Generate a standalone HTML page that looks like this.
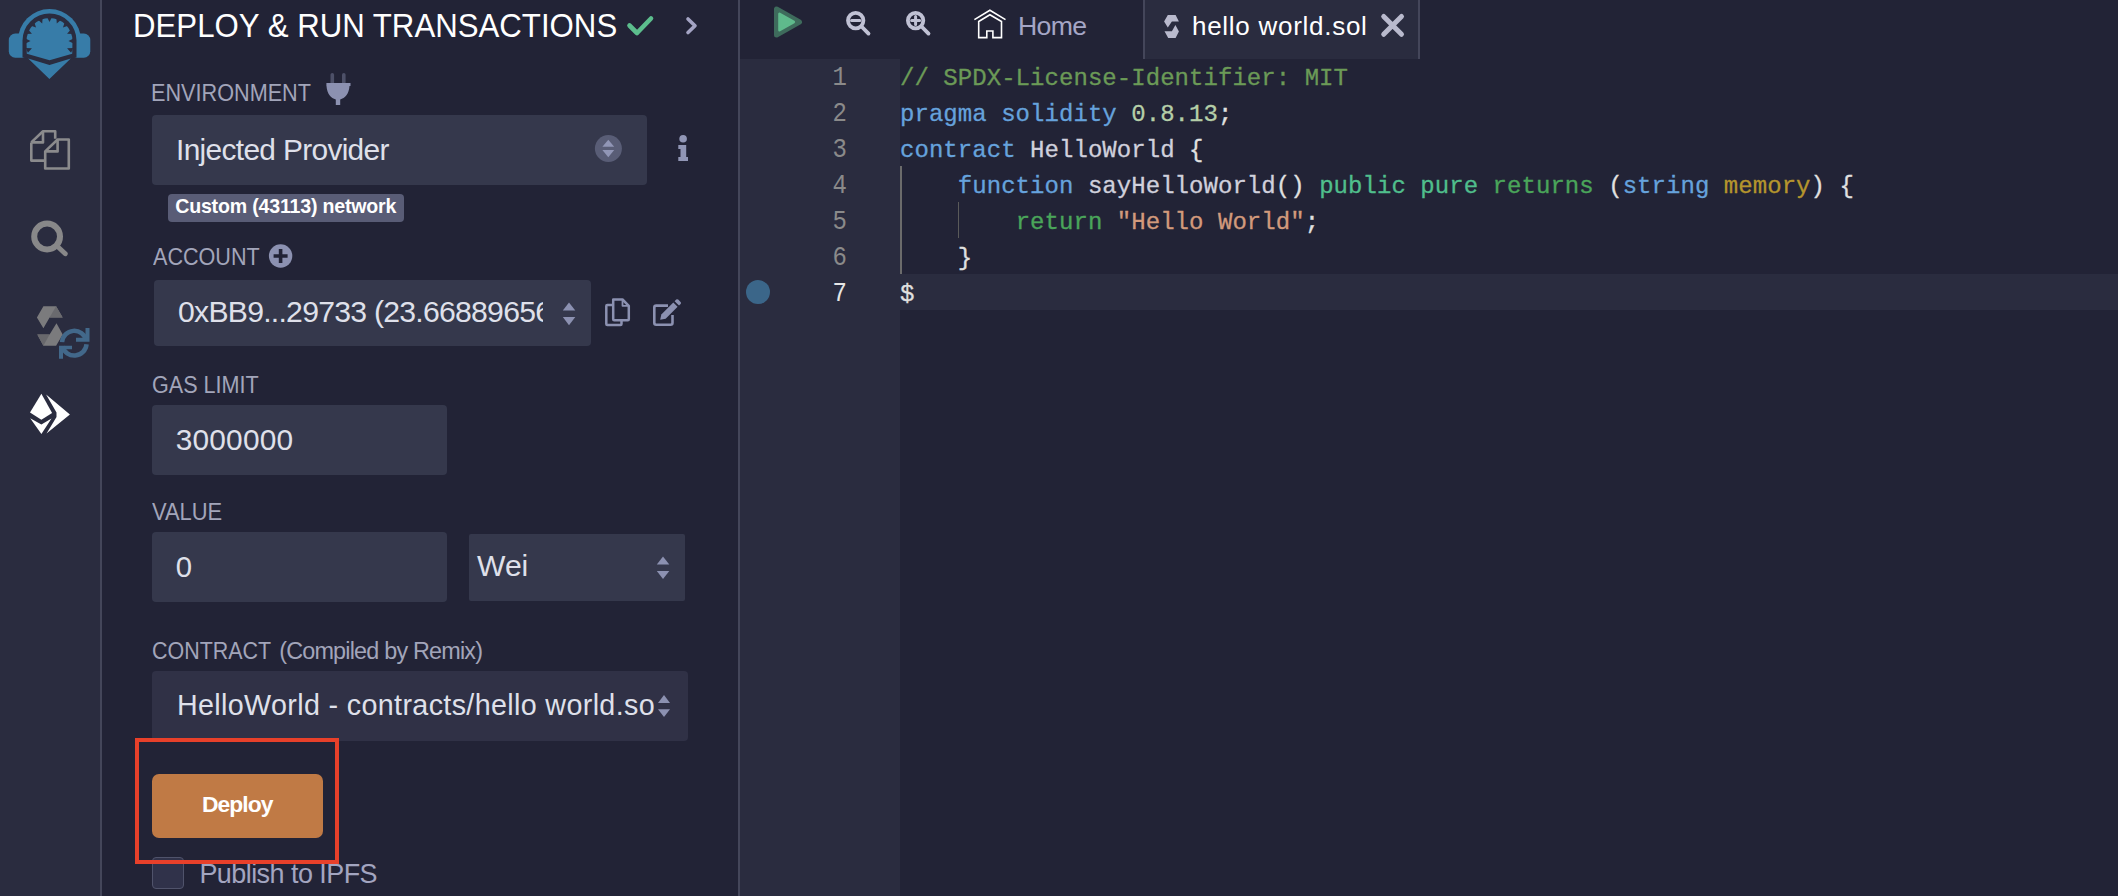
<!DOCTYPE html>
<html><head><meta charset="utf-8">
<style>
*{margin:0;padding:0;box-sizing:border-box}
html,body{width:2118px;height:896px;overflow:hidden;background:#222336;font-family:"Liberation Sans",sans-serif}
.abs{position:absolute}
.t{position:absolute;white-space:nowrap;font-family:"Liberation Sans",sans-serif}
svg{position:absolute;z-index:2}
#iconpanel{left:0;top:0;width:100px;height:896px;background:#2a2c3f}
#b1{left:100px;top:0;width:2px;height:896px;background:#44465a}
#side{left:102px;top:0;width:636px;height:896px;background:#222336}
#b2{left:738px;top:0;width:2px;height:896px;background:#44465a}
.lbl{color:#a2a3bd;font-size:23px;white-space:nowrap}
.sel{background:#35384c;border-radius:4px}
.val{color:#e0e1ea;font-size:28px;white-space:nowrap}
.code{font-family:"Liberation Mono",monospace;font-size:24px;white-space:pre;line-height:36px;-webkit-text-stroke:0.3px;letter-spacing:0.05px}
.ln{position:absolute;left:740px;width:107px;text-align:right;font-family:"Liberation Mono",monospace;font-size:24px;line-height:36px;color:#8a8a8a;transform:scaleY(1.15);transform-origin:0 24px}
.cm{color:#6b9a57}.kw{color:#66a2dc}.nu{color:#b5cea8}.id{color:#d0d0dc}.vis{color:#50be8c}.ret{color:#4aa55a}.mem{color:#b5952d}.str{color:#d29a7c}
</style></head><body>
<div id="iconpanel" class="abs"></div>
<div id="b1" class="abs"></div>
<div id="side" class="abs"></div>
<div id="b2" class="abs"></div>

<!-- side panel content -->
<div id="title" class="t" style="left:132.6px;top:-8.0px;font-size:33.91px;line-height:67.83px;letter-spacing:0px;color:#ffffff;font-weight:normal;transform:scaleX(0.92);transform-origin:0 0;">DEPLOY &amp; RUN TRANSACTIONS</div>

<div id="envlbl" class="t" style="left:151.2px;top:70.0px;font-size:23.33px;line-height:46.67px;letter-spacing:0px;color:#a2a5ba;font-weight:normal;transform:scaleX(0.928);transform-origin:0 0;">ENVIRONMENT</div>
<div id="envsel" class="abs sel" style="left:152px;top:115px;width:495px;height:70px"></div>
<div id="envtxt" class="t" style="left:176.0px;top:119.6px;font-size:29.86px;line-height:59.71px;letter-spacing:-0.663px;color:#dfe0ea;font-weight:normal;">Injected Provider</div>

<div id="badge" class="abs" style="left:168px;top:194px;width:236px;height:28px;background:#595c76;border-radius:4px"></div>
<div id="badgetxt" class="t" style="left:175.2px;top:187.4px;font-size:19.58px;line-height:39.15px;letter-spacing:-0.19px;color:#ffffff;font-weight:bold;">Custom (43113) network</div>

<div id="acclbl" class="t" style="left:152.5px;top:233.2px;font-size:23.91px;line-height:47.83px;letter-spacing:0px;color:#a2a5ba;font-weight:normal;transform:scaleX(0.903);transform-origin:0 0;">ACCOUNT</div>
<div id="accsel" class="abs sel" style="left:154px;top:280px;width:437px;height:66px"></div>
<div class="abs" style="left:154px;top:280px;width:389px;height:66px;overflow:hidden"><div id="acctxt" class="t" style="left:24px;top:1.1px;font-size:30.2px;line-height:61.45px;letter-spacing:-0.75px;color:#dfe0ea">0xBB9...29733 (23.66889656</div></div>

<div id="gaslbl" class="t" style="left:151.8px;top:360.5px;font-size:24.06px;line-height:48.12px;letter-spacing:0px;color:#a2a5ba;font-weight:normal;transform:scaleX(0.897);transform-origin:0 0;">GAS LIMIT</div>
<div id="gassel" class="abs sel" style="left:152px;top:405px;width:295px;height:70px"></div>
<div id="gastxt" class="t" style="left:175.7px;top:410.4px;font-size:29.86px;line-height:59.72px;letter-spacing:0.2px;color:#dfe0ea;font-weight:normal;">3000000</div>

<div id="vallbl" class="t" style="left:152.0px;top:487.5px;font-size:24.2px;line-height:48.41px;letter-spacing:0px;color:#a2a5ba;font-weight:normal;transform:scaleX(0.906);transform-origin:0 0;">VALUE</div>
<div id="valsel" class="abs sel" style="left:152px;top:532px;width:295px;height:70px"></div>
<div id="valtxt" class="t" style="left:175.7px;top:538.3px;font-size:29.3px;line-height:58.59px;letter-spacing:0.0px;color:#dfe0ea;font-weight:normal;">0</div>
<div id="weisel" class="abs sel" style="left:469px;top:534px;width:216px;height:67px;border-radius:2px"></div>
<div id="weitxt" class="t" style="left:477.1px;top:536.4px;font-size:30.14px;line-height:60.29px;letter-spacing:-0.1px;color:#dfe0ea;font-weight:normal;">Wei</div>

<div id="conlbl" class="t" style="left:151.7px;top:626.6px;font-size:24.06px;line-height:48.12px;letter-spacing:0px;color:#a2a5ba;font-weight:normal;transform:scaleX(0.892);transform-origin:0 0;">CONTRACT</div><div id="conlbl2" class="t" style="left:279.2px;top:627.6px;font-size:23.38px;line-height:46.76px;letter-spacing:-0.8px;color:#a2a5ba;font-weight:normal;">(Compiled by Remix)</div>
<div id="consel" class="abs sel" style="left:152px;top:671px;width:536px;height:70px;background:#303146"></div>
<div class="abs" style="left:152px;top:671px;width:503.7px;height:70px;overflow:hidden"><div id="contxt" class="t" style="left:25px;top:6px;font-size:28.7px;line-height:57.39px;letter-spacing:0.35px;color:#dfe0ea">HelloWorld - contracts/hello world.sol</div></div>

<div id="deploy" class="abs" style="left:152px;top:774px;width:171px;height:64px;background:#c07a45;border-radius:7px"></div>
<div id="deploytxt" class="t" style="left:202.0px;top:781.9px;font-size:22.9px;line-height:45.8px;letter-spacing:-0.96px;color:#ffffff;font-weight:bold;">Deploy</div>

<div id="chk" class="abs" style="left:152px;top:857px;width:32px;height:32px;background:#30324a;border:1.5px solid #50536b;border-radius:4px"></div>
<div id="ipfs" class="t" style="left:199.4px;top:848.0px;font-size:26.96px;line-height:53.91px;letter-spacing:-0.543px;color:#a3a5c0;font-weight:normal;">Publish to IPFS</div>
<div id="redbox" class="abs"  style="left:135px;top:738px;width:204px;height:126px;border:4px solid #e8402a;z-index:3"></div>


<div id="tab" class="abs" style="left:1143px;top:0;width:277px;height:59px;background:#2a2c3f;border-left:2px solid #44465a;border-right:2px solid #44465a"></div>
<!-- icon panel icons -->
<svg class="abs" style="left:0;top:0" width="100" height="90" viewBox="0 0 100 90">
  <defs><clipPath id="topc"><rect x="0" y="0" width="100" height="45"/></clipPath></defs>
  <circle cx="49.5" cy="40.5" r="31.5" fill="#377ca8" clip-path="url(#topc)"/>
  <rect x="8.8" y="33.5" width="20" height="24.2" rx="6.5" fill="#377ca8"/>
  <rect x="70.5" y="33.5" width="19.8" height="24.2" rx="6.5" fill="#377ca8"/>
  <path d="M22.5 40.5 A27 27 0 0 1 76.5 40.5 L76.5 57.2 L49.5 65 L22.5 57.2 Z" fill="#2a2c3f"/>
  <polygon points="28.2,58.5 49.5,65 70.8,58.5 49.4,79.1" fill="#377ca8"/>
  <path d="M26.5 41 A23 23 0 0 1 72.5 41 L72.2 53.7 L49.6 60.2 L26.8 53.7 Z" fill="#377ca8"/>
  <g fill="#2a2c3f"><polygon points="25.83,47.88 27.90,52.87 31.95,48.27"/><polygon points="25.00,38.30 25.00,43.70 30.50,41.00"/><polygon points="27.90,29.13 25.83,34.12 31.95,33.73"/><polygon points="34.09,21.77 30.27,25.59 36.06,27.56"/><polygon points="42.62,17.33 37.63,19.40 42.23,23.45"/><polygon points="52.20,16.50 46.80,16.50 49.50,22.00"/><polygon points="61.37,19.40 56.38,17.33 56.77,23.45"/><polygon points="68.73,25.59 64.91,21.77 62.94,27.56"/><polygon points="73.17,34.12 71.10,29.13 67.05,33.73"/><polygon points="74.00,43.70 74.00,38.30 68.50,41.00"/><polygon points="71.10,52.87 73.17,47.88 67.05,48.27"/></g>
</svg>
<svg class="abs" style="left:28px;top:128px" width="44" height="44" viewBox="0 0 44 44" fill="none" stroke="#8b8b8d" stroke-width="2.6" stroke-linejoin="round">
  <path d="M3.3 14.4 L15 3.3 L27.2 3.3 L27.2 10.8"/>
  <path d="M3.3 14.4 L3.3 32.6 L17.2 32.6"/>
  <path d="M3.3 14.4 L15 14.4 L15 3.3"/>
  <path d="M17.2 23.4 L29.6 11.5 L40.8 11.5 L40.8 40.5 L17.2 40.5 Z"/>
  <path d="M17.2 23.4 L29.6 23.4 L29.6 11.5"/>
</svg>
<svg class="abs" style="left:28px;top:218px" width="44" height="44" viewBox="0 0 44 44" fill="none" stroke="#888889" stroke-linecap="round">
  <circle cx="19.1" cy="18.5" r="12.9" stroke-width="6"/>
  <path d="M28.5 27.5 L37.3 35.8" stroke-width="4.8"/>
</svg>
<svg class="abs" style="left:30px;top:300px" width="65" height="65" viewBox="0 0 65 65">
  <polygon points="13.4,6.2 26.1,6.2 32.7,17.4 19.6,17.4 13.4,28.3 6.9,17.4" fill="#7b7b7d"/>
  <polygon points="26.1,6.2 32.7,17.4 19.6,17.4" fill="#6a6a6e"/>
  <polygon points="7.3,34.5 19.6,34.5 26.5,23.2 32.7,34.5 26.1,45.7 13.4,45.7" fill="#7b7b7d"/>
  <polygon points="7.3,34.5 19.6,34.5 13.4,45.7" fill="#68686c"/>
  <g fill="none" stroke="#42688a" stroke-width="4.5">
    <path d="M32.05 42.1 A12.3 12.3 0 0 1 56.2 40"/>
    <path d="M56.55 44.3 A12.3 12.3 0 0 1 32.4 46.4"/>
  </g>
  <polygon points="55.5,28 59.5,28 59.5,41.7 46,41.7 46,37.7 55.5,37.7" fill="#42688a"/>
  <polygon points="29,45.7 42,45.7 42,49.3 33,49.3 33,58.8 29,58.8" fill="#42688a"/>
</svg>
<svg class="abs" style="left:20px;top:385px" width="60" height="60" viewBox="0 0 60 60" fill="#ffffff">
  <polygon points="21.4,8.7 10,27.5 21.4,34.8 32.1,28.1"/>
  <polygon points="10.2,33.2 21.4,39.5 31.5,33.5 21.4,48.9"/>
  <polygon points="26.1,9.4 49.9,29.5 26.5,48.6 36.5,32.1 36.5,27.5"/>
</svg>

<!-- side panel icons -->
<svg class="abs" style="left:620px;top:10px" width="40" height="32" viewBox="0 0 40 32" fill="none" stroke="#5cbd8d" stroke-width="4.6" stroke-linecap="round" stroke-linejoin="round">
  <path d="M9.5 15.5 L17 23 L31 8.5"/>
</svg>
<svg class="abs" style="left:680px;top:12px" width="24" height="28" viewBox="0 0 24 28" fill="none" stroke="#a4a4c4" stroke-width="3.6" stroke-linecap="round" stroke-linejoin="round">
  <path d="M8 7 L15 13.8 L8 20.5"/>
</svg>
<svg class="abs" style="left:320px;top:70px" width="40" height="40" viewBox="0 0 40 40">
  <rect x="10.5" y="3" width="3.6" height="12" rx="1.8" fill="#4d5068"/>
  <rect x="22" y="3" width="3.6" height="12" rx="1.8" fill="#4d5068"/>
  <path d="M6.4 13 L30.5 13 L30.5 16 L29.5 16 C29 24 25 28 20.2 29.5 L20.2 35 L15.8 35 L15.8 29.5 C11 28 7 24 6.5 16 L6.4 16 Z" fill="#8c91b1"/>
</svg>
<svg class="abs" style="left:590px;top:130px" width="36" height="36" viewBox="0 0 36 36">
  <circle cx="18.4" cy="18.5" r="13.5" fill="#595d76"/>
  <polygon points="12.4,16.8 24.2,16.8 18.3,9.8" fill="#9196b6"/>
  <polygon points="12.4,20.1 24.2,20.1 18.3,27.2" fill="#9196b6"/>
</svg>
<svg class="abs" style="left:670px;top:130px" width="30" height="36" viewBox="0 0 30 36" fill="#9196b6">
  <circle cx="13.1" cy="8.8" r="3.8"/>
  <path d="M8.3 15.1 L16.2 15.1 L16.2 27 L18 27 L18 31 L8.3 31 L8.3 27 L10.5 27 L10.5 19 L8.3 19 Z"/>
</svg>
<svg class="abs" style="left:264px;top:240px" width="32" height="32" viewBox="0 0 32 32">
  <circle cx="16.6" cy="16" r="11.7" fill="#8c91b1"/>
  <path d="M14.8 9 L18.4 9 L18.4 14.2 L23.6 14.2 L23.6 17.8 L18.4 17.8 L18.4 23 L14.8 23 L14.8 17.8 L9.6 17.8 L9.6 14.2 L14.8 14.2 Z" fill="#222336"/>
</svg>
<svg class="abs" style="left:555px;top:295px" width="30" height="36" viewBox="0 0 30 36" fill="#8c91b1">
  <polygon points="7.8,15.5 20.3,15.5 14,7.5"/>
  <polygon points="7.8,22 20.3,22 14,30.2"/>
</svg>
<svg class="abs" style="left:600px;top:295px" width="36" height="36" viewBox="0 0 36 36" fill="none" stroke="#8c91b1" stroke-width="2.5" stroke-linejoin="round">
  <path d="M13.2 10 L7.3 10 Q6.3 10 6.3 11 L6.3 29 Q6.3 30 7.3 30 L20.5 30 Q21.5 30 21.5 29 L21.5 25.3"/>
  <path d="M13.2 4.5 L22.5 4.5 L28.8 10.8 L28.8 24.3 Q28.8 25.3 27.8 25.3 L14.2 25.3 Q13.2 25.3 13.2 24.3 Z"/>
  <path d="M22.5 4.5 L22.5 10.8 L28.8 10.8" stroke-width="1.8"/>
</svg>
<svg class="abs" style="left:648px;top:295px" width="40" height="36" viewBox="0 0 40 36">
  <path d="M20 10.6 L8.2 10.6 Q6.3 10.6 6.3 12.5 L6.3 27.8 Q6.3 29.7 8.2 29.7 L22.6 29.7 Q24.5 29.7 24.5 27.8 L24.5 20" fill="none" stroke="#8c91b1" stroke-width="2.6"/>
  <path d="M12.2 24.8 L13.3 19.5 L25.3 7.5 L29.6 11.8 L17.6 23.8 Z" fill="#8c91b1"/>
  <path d="M26.6 6.2 L28.2 4.6 Q29.2 3.7 30.2 4.6 L32.6 7 Q33.5 8 32.6 9 L31 10.5 Z" fill="#8c91b1"/>
</svg>
<svg class="abs" style="left:650px;top:550px" width="24" height="36" viewBox="0 0 24 36" fill="#8c91b1">
  <polygon points="6.8,14.6 19.3,14.6 13,6.6"/>
  <polygon points="6.8,21 19.3,21 13,29"/>
</svg>
<svg class="abs" style="left:650px;top:688px" width="24" height="36" viewBox="0 0 24 36" fill="#8c91b1">
  <polygon points="8,15 20,15 14,7"/>
  <polygon points="8,21.3 20,21.3 14,29"/>
</svg>

<!-- editor header icons -->
<svg class="abs" style="left:765px;top:0" width="45" height="45" viewBox="0 0 45 45">
  <polygon points="11.5,9 11.5,35 34.5,22" fill="#3e6b5c" stroke="#3e6b5c" stroke-width="5" stroke-linejoin="round"/>
  <polygon points="14.5,13.8 14.5,30.2 28.8,22" fill="#5fba8c" stroke="#5fba8c" stroke-width="2.6" stroke-linejoin="round"/>
</svg>
<svg class="abs" style="left:840px;top:5px" width="36" height="36" viewBox="0 0 36 36" fill="none" stroke="#c0c1d4" stroke-width="3.8" stroke-linecap="round">
  <circle cx="15.7" cy="15.6" r="7.7"/>
  <path d="M21.5 21.5 L28.5 28.6"/>
  <path d="M11.5 15.6 L19.8 15.6" stroke-width="3"/>
</svg>
<svg class="abs" style="left:900px;top:5px" width="36" height="36" viewBox="0 0 36 36" fill="none" stroke="#c0c1d4" stroke-width="3.8" stroke-linecap="round">
  <circle cx="15.6" cy="15.6" r="7.7"/>
  <path d="M21.5 21.5 L28.5 28.6"/>
  <path d="M11.6 15.6 L19.6 15.6 M15.6 11.6 L15.6 19.6" stroke-width="3"/>
</svg>
<svg class="abs" style="left:965px;top:0" width="50" height="45" viewBox="0 0 50 45" fill="none" stroke="#ffffff" stroke-width="1.6">
  <path d="M9.4 19.6 L24.9 10.2 L40.5 19.6"/>
  <path d="M13.7 21.5 L24.9 14.8 L36.5 21.5 L36.5 37.6 L27.9 37.6 L27.9 31 L21.8 31 L21.8 37.6 L13.7 37.6 Z"/>
</svg>
<svg class="abs" style="left:1160px;top:12px" width="24" height="30" viewBox="0 0 24 30" fill="#b9bacd">
  <polygon points="7.8,3 15.6,3 18.9,9.4 11.9,9.4 7.8,15.6 4.1,9.4"/>
  <polygon points="4.5,19.3 11.9,19.3 15.4,13.1 18.9,19.5 15.6,25.9 8.2,25.9"/>
</svg>
<svg class="abs" style="left:1375px;top:8px" width="36" height="36" viewBox="0 0 36 36" fill="none" stroke="#b9bacd" stroke-width="5" stroke-linecap="round">
  <path d="M8.7 8.5 L26.5 26.3 M26.5 8.5 L8.7 26.3"/>
</svg>

<!-- editor -->
<div id="gutter" class="abs" style="left:740px;top:59px;width:160px;height:837px;background:#2a2c3f"></div>
<div id="hl" class="abs" style="left:900px;top:274px;width:1218px;height:36px;background:#2a2c3f"></div>
<div id="hometxt" class="t" style="left:1017.9px;top:0.0px;font-size:26.67px;line-height:53.33px;letter-spacing:-0.6px;color:#a5a6c6;font-weight:normal;">Home</div>
<div id="tabtxt" class="t" style="left:1192.0px;top:0.0px;font-size:26.03px;line-height:52.05px;letter-spacing:0.714px;color:#ffffff;font-weight:normal;">hello world.sol</div>

<div class="ln" style="top:61px">1</div><div class="ln" style="top:97px">2</div><div class="ln" style="top:133px">3</div><div class="ln" style="top:169px">4</div><div class="ln" style="top:205px">5</div><div class="ln" style="top:241px">6</div><div class="ln" style="top:277px;color:#e6e6e6">7</div>
<div id="guide1" class="abs" style="left:900px;top:166px;width:2px;height:108px;background:#6b6b6b"></div>
<div id="guide2" class="abs" style="left:958px;top:202px;width:1px;height:36px;background:#5a5a5a"></div>
<div id="dot" class="abs" style="left:746px;top:280px;width:24px;height:24px;border-radius:50%;background:#3b6689"></div>
<div id="code" class="abs code" style="left:900px;top:61px;color:#e0e0e0"><span class="cm">// SPDX-License-Identifier: MIT</span>
<span class="kw">pragma</span> <span class="kw">solidity</span> <span class="nu">0.8.13</span>;
<span class="kw">contract</span> <span class="id">HelloWorld</span> {
    <span class="kw">function</span> <span class="id">sayHelloWorld</span>() <span class="vis">public</span> <span class="vis">pure</span> <span class="ret">returns</span> (<span class="kw">string</span> <span class="mem">memory</span>) {
        <span class="ret">return</span> <span class="str">"Hello World"</span>;
    }
$</div>
</body></html>
